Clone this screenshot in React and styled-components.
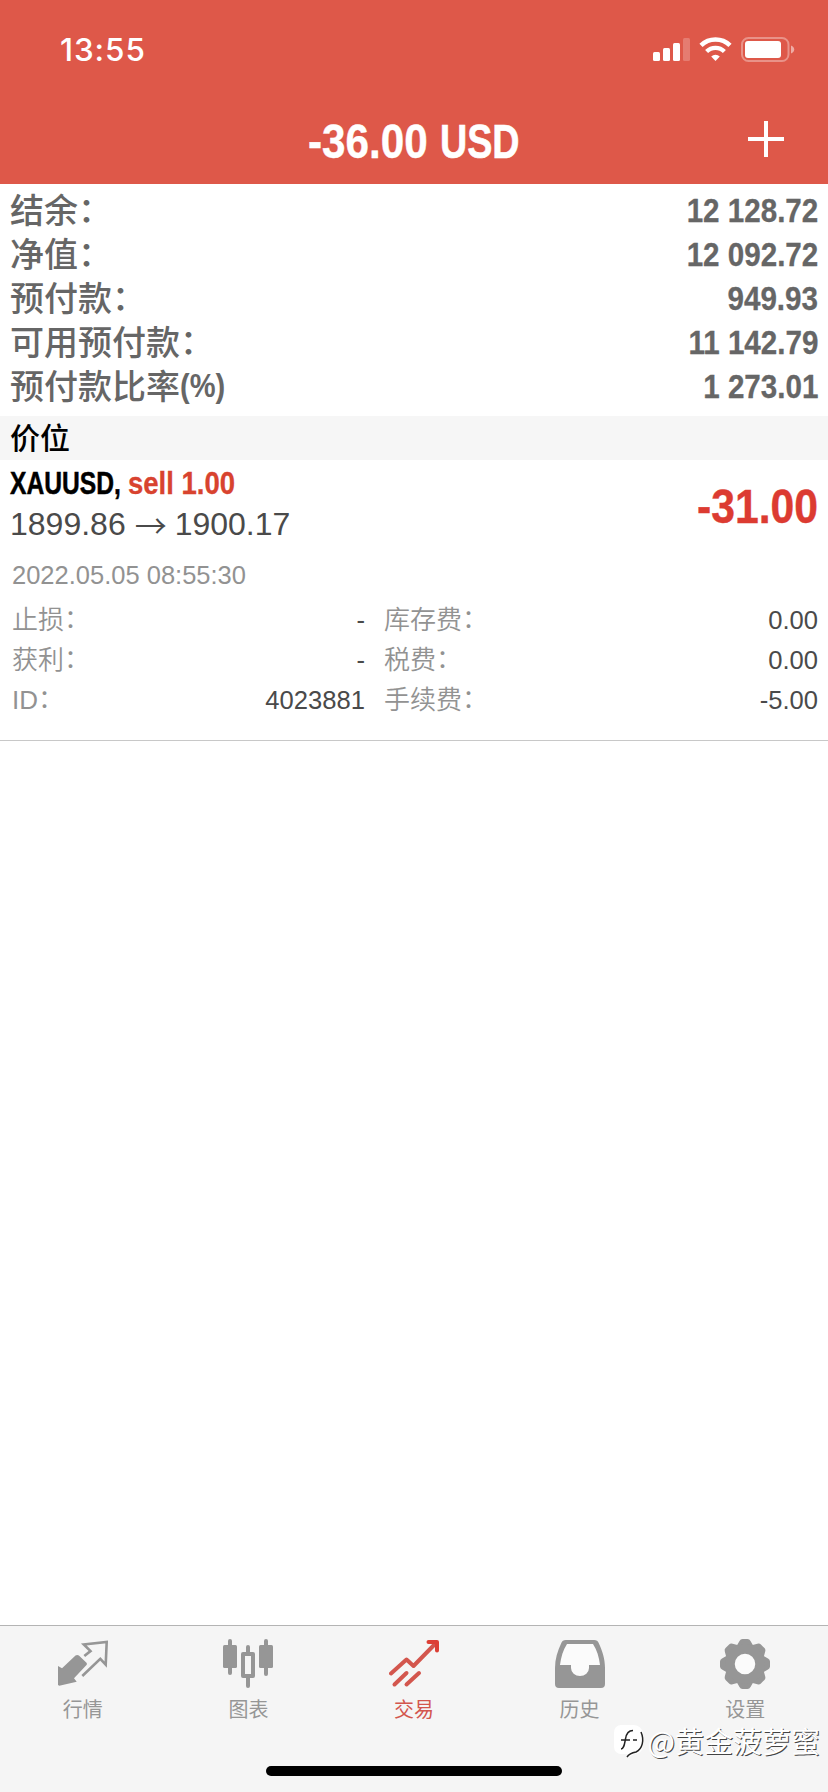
import React from "react";
import styled, {createGlobalStyle} from "styled-components";

const GlobalStyle = createGlobalStyle`
  * { box-sizing: border-box; }
  body {
    margin: 0;
    background: #fff;
    font-family: "Liberation Sans", "Noto Sans CJK SC", sans-serif;
  }
`;

const account = [
  {label: '结余', value: '12 128.72'},
  {label: '净值', value: '12 092.72'},
  {label: '预付款', value: '949.93'},
  {label: '可用预付款', value: '11 142.79'},
  {label: '预付款比率', unit: '(%)', value: '1 273.01'},
];

const details = [
  ['止损', '-', '库存费', '0.00'],
  ['获利', '-', '税费', '0.00'],
  ['ID', '4023881', '手续费', '-5.00'],
];

const Screen = styled.div`
  display: flex;
  flex-direction: column;
  position: relative;
  width: 828px;
  height: 1792px;
  overflow: hidden;
  background: #fff;
`;

const Header = styled.header`
  height: 184px;
  background: #de5849;
  color: #fff;
`;

const StatusBar = styled.div`
  display: flex;
  align-items: center;
  justify-content: space-between;
  height: 100px;
  padding: 0 33px 0 60px;
`;

const Clock = styled.div`
  font-family: Inter, sans-serif;
  font-size: 31.5px;
  font-weight: 500;
  line-height: 40px;
  letter-spacing: 0.9px;
`;

const NavBar = styled.div`
  display: grid;
  grid-template-columns: 1fr auto 1fr;
  align-items: center;
  height: 84px;
  padding: 0 44px;
`;

const AddButton = styled.button`
  grid-column: 3;
  justify-self: end;
  display: flex;
  padding: 0;
  border: 0;
  background: none;
  margin-top: -6px;
`;

// Liberation Sans has no condensed cut, so bold text is squeezed instead.
// $width reserves the squeezed width, since a transform leaves the layout box alone
const Condensed = styled.span`
  display: inline-block;
  width: ${props => props.$width ? `${props.$width}px` : 'auto'};
  font-weight: 700;
  font-size: ${props => props.$size}px;
  white-space: pre;
  transform: scaleX(${props => props.$squeeze});
  transform-origin: ${props => props.$width ? 'left' : 'right'} center;
  -webkit-text-stroke: ${props => props.$stroke || 0}px currentColor;
`;

const Title = styled.div`
  grid-column: 2;
  display: flex;
  height: 84px;
  line-height: 84px;
`;

const Summary = styled.section`
  padding: 4px 10px 8px;
  color: #666;
`;

const SummaryRow = styled.div`
  display: flex;
  justify-content: space-between;
  height: 44px;
  line-height: 44px;
`;

const SummaryLabel = styled.div`
  display: flex;
  font-size: 34px;
  font-weight: 500;
`;

const LabelText = styled.span`
  line-height: 46px;
`;

const Colon = styled.span`
  position: relative;
  top: -0.02em;
`;

const SectionTitle = styled.h2`
  height: 44px;
  margin: 0;
  padding: 0 10px;
  background: #f6f6f6;
  color: #000;
  font-size: 30px;
  font-weight: 500;
  line-height: 46px;
`;

const Position = styled.section`
  height: 281px;
  padding: 3px 10px 0 12px;
  border-bottom: 1px solid #c8c8c8;
`;

const PositionTop = styled.div`
  display: flex;
  justify-content: space-between;
  height: 86px;
`;

const Symbol = styled.div`
  display: flex;
  height: 40px;
  margin-left: -2px;
  line-height: 40px;
  color: #000;
`;

const Side = styled(Condensed)`
  color: #d8432f;
`;

const Prices = styled.div`
  display: flex;
  gap: 9px;
  height: 42px;
  color: #4a4a4a;
  font-size: 32px;
  line-height: 42px;
  margin-left: -2px;
`;

const Arrow = styled.span`
  width: 31px;
  font-family: "Noto Sans CJK SC", sans-serif;
  font-weight: 350;
`;

const Profit = styled.div`
  display: flex;
  color: #dc3b31;
  line-height: 87px;
`;

const OpenTime = styled.div`
  margin-top: 6px;
  color: #929292;
  font-size: 25.5px;
  line-height: 40px;
`;

const Details = styled.div`
  display: grid;
  grid-template-columns: 154px 199px 154px 1fr;
  grid-auto-rows: 40px;
  margin-top: 5px;
  font-size: 25.6px;
  line-height: 40px;
`;

const DetailLabel = styled.div`
  padding-left: ${props => props.$indent || 0}px;
  color: #929292;
  font-size: 26px;
  font-weight: 350;
  line-height: 41px;
`;

const DetailValue = styled.div`
  color: #4a4a4a;
  text-align: right;
`;

const TabBar = styled.nav`
  display: grid;
  grid-template-columns: repeat(5, 1fr);
  align-content: start;
  height: 167px;
  margin-top: auto;
  padding-top: 13px;
  border-top: 1px solid #b4b4b4;
  background: #f5f5f5;
`;

const Tab = styled.div`
  display: flex;
  flex-direction: column;
  align-items: center;
  color: ${props => props.$active ? '#d3564d' : '#969696'};
  font-size: 20px;
  line-height: 28px;

  svg {
    display: block;
    margin-bottom: 7px;
  }
`;

const HomeIndicator = styled.div`
  position: absolute;
  left: 266px;
  bottom: 16px;
  width: 296px;
  height: 10px;
  border-radius: 5px;
  background: #000;
`;

const Watermark = styled.div`
  position: absolute;
  right: 8px;
  bottom: 32px;
  display: flex;
  align-items: center;
  gap: 3px;
  color: #fff;
  font-family: "Noto Sans CJK SC", sans-serif;
  font-size: 29px;
  line-height: 40px;
  white-space: nowrap;
  text-shadow: 1px 1px 0 #444;

  svg {
    margin-top: 4px;
  }
`;

function StatusIcons() {
  return (
    <svg width="142" height="26" viewBox="0 0 142 26" fill="#fff">
      <rect x="0" y="15" width="7" height="9" rx="1.5"/>
      <rect x="10" y="11" width="7" height="13" rx="1.5"/>
      <rect x="20" y="6" width="7" height="18" rx="1.5"/>
      <rect x="30" y="1" width="7" height="23" rx="1.5" opacity="0.22"/>
      <path d="M48 8.300a21 21 0 0 1 29 0" fill="none" stroke="#fff" strokeWidth="4.6"/>
      <path d="M53.600 14.500a12.500 12.500 0 0 1 17.800 0" fill="none" stroke="#fff" strokeWidth="4.2"/>
      <path d="M58.200 19.600a6.200 6.200 0 0 1 8.600 0L62.500 24z"/>
      <rect x="89" y="1" width="46.5" height="23" rx="6.500" fill="none" stroke="#fff" strokeWidth="2" opacity="0.35"/>
      <rect x="92" y="4" width="36" height="17" rx="3"/>
      <path d="M138 8.500c4.300 1.500 4.300 6.500 0 8z" opacity="0.5"/>
    </svg>
  )
}

const icons = {
  quotes: (
    <svg width="50" height="50" viewBox="0 0 50 50">
      <path d="M0 27l4 2.300L17.500 16.500q1.700-1.200 3.400 0L28.500 23.700q1 1.200 0 2.300L16 39.300l2.700 3.400L1.300 46.700 0 46z" fill="currentColor"/>
      <path d="M26.300 17l6.200-4.900-6.700-6.600L48.700 3 47.700 25.700l-5.400-5.800L24.300 37" fill="none" stroke="currentColor" strokeWidth="2.6"/>
    </svg>
  ),
  chart: (
    <svg width="50" height="50" viewBox="0 0 50 50" fill="currentColor">
      <rect x="5" y="0" width="4" height="36" rx="2"/>
      <rect x="0" y="6" width="14" height="23" rx="1.500"/>
      <rect x="41" y="0" width="4" height="37" rx="2"/>
      <rect x="36" y="6" width="14" height="23" rx="1.500"/>
      <rect x="23" y="6" width="4" height="10" rx="2"/>
      <rect x="23" y="36" width="4" height="13" rx="2"/>
      <rect x="20" y="15" width="10" height="22" fill="none" stroke="currentColor" strokeWidth="4" strokeLinejoin="round"/>
    </svg>
  ),
  trade: (
    <svg width="50" height="50" viewBox="0 0 50 50" fill="none" stroke="currentColor" strokeWidth="4" strokeLinecap="round" strokeLinejoin="round">
      <path d="M2 34.500L17.500 20.500l7 6.500L47 4"/>
      <path d="M39.500 3H48v8.500" stroke="#dc3f35"/>
      <path d="M5.500 45.500l12-11.500M17.500 45.500L30 34"/>
    </svg>
  ),
  history: (
    <svg width="50" height="50" viewBox="0 0 50 50" fill="currentColor" fillRule="evenodd">
      <path d="M11 1h28a5 5 0 0 1 4.800 3.200C47.500 12 50 20 50 29v16a4 4 0 0 1-4 4H4a4 4 0 0 1-4-4V29C0 20 2.500 12 6.200 4.200A5 5 0 0 1 11 1z"/>
      <path d="M12 5C8 11 6 18 5 26h11v3a9 8 0 0 0 18 0v-3h11C44 18 42 11 38 5z" fill="#fbfbfb"/>
    </svg>
  ),
  settings: (
    <svg width="50" height="50" viewBox="-25 -25 50 50" fill="currentColor">
      {[0, 45, 90, 135, 180, 225, 270, 315].map(angle => (
        <path key={angle} transform={`rotate(${angle})`} d="M-9-17L-5.500-23Q-4.500-25-2.500-25h5Q4.500-25 5.500-23L9-17z"/>
      ))}
      <circle r="15" fill="#fbfbfb" stroke="currentColor" strokeWidth="9.500"/>
    </svg>
  ),
};

const tabs = [
  {icon: 'quotes', name: '行情'},
  {icon: 'chart', name: '图表'},
  {icon: 'trade', name: '交易'},
  {icon: 'history', name: '历史'},
  {icon: 'settings', name: '设置'},
];

function App() {
  return (
    <Screen>
      <GlobalStyle/>
      <Header>
        <StatusBar>
          <Clock>13:55</Clock>
          <StatusIcons/>
        </StatusBar>
        <NavBar>
          <Title>
            <Condensed $size={48} $squeeze={0.88} $width={132} $stroke={0.4}>-36.00</Condensed>
            <Condensed $size={48} $squeeze={0.785} $width={81} $stroke={0.6}>USD</Condensed>
          </Title>
          <AddButton>
            <svg width="36" height="36" viewBox="0 0 36 36" stroke="#fff" strokeWidth="4">
              <path d="M18 0v36M0 18h36"/>
            </svg>
          </AddButton>
        </NavBar>
      </Header>
      <Summary>
        {account.map(row => (
          <SummaryRow key={row.label}>
            <SummaryLabel>
              <LabelText>{row.label}{!row.unit && <Colon>：</Colon>}</LabelText>
              {row.unit && <Condensed $size={33} $squeeze={0.88} $width={46}>{row.unit}</Condensed>}
            </SummaryLabel>
            <Condensed $size={34} $squeeze={0.87} $stroke={0.3}>{row.value}</Condensed>
          </SummaryRow>
        ))}
      </Summary>
      <SectionTitle>价位</SectionTitle>
      <Position>
        <PositionTop>
          <div>
            <Symbol>
              <Condensed $size={32} $squeeze={0.77} $width={118} $stroke={0.5}>XAUUSD,</Condensed>
              <Side $size={32} $squeeze={0.86} $width={108} $stroke={0.3}>sell 1.00</Side>
            </Symbol>
            <Prices>
              <span>1899.86</span>
              <Arrow>→</Arrow>
              <span>1900.17</span>
            </Prices>
          </div>
          <Profit>
            <Condensed $size={48} $squeeze={0.89} $stroke={0.4}>-31.00</Condensed>
          </Profit>
        </PositionTop>
        <OpenTime>2022.05.05 08:55:30</OpenTime>
        <Details>
          {details.map(([left, leftValue, right, rightValue]) => (
            <React.Fragment key={left}>
              <DetailLabel>{left}<Colon>：</Colon></DetailLabel>
              <DetailValue>{leftValue}</DetailValue>
              <DetailLabel $indent={19}>{right}<Colon>：</Colon></DetailLabel>
              <DetailValue>{rightValue}</DetailValue>
            </React.Fragment>
          ))}
        </Details>
      </Position>
      <TabBar>
        {tabs.map(({icon, name}) => (
          <Tab key={icon} $active={icon === 'trade'}>
            {icons[icon]}
            {name}
          </Tab>
        ))}
      </TabBar>
      <HomeIndicator/>
      <Watermark>
        <svg width="32" height="36" viewBox="0 0 32 36">
          <path d="M8 1h13a9 9 0 0 1 9 9v11c0 6-4 9-9 9l-6 4 1-4H8a7 7 0 0 1-7-7V8a7 7 0 0 1 7-7z" fill="#fff"/>
          <path d="M28 8c3.500 8 1.500 17-5 20-4 .8-7 2-9 5M8 25c3 0 3.500-5 4.500-10C13.200 10 15 6.500 20 6.500M8 16h9M20 16h4" fill="none" stroke="#222" strokeWidth="1.500"/>
        </svg>
        @黄金菠萝蜜
      </Watermark>
    </Screen>
  )
}

export default App
